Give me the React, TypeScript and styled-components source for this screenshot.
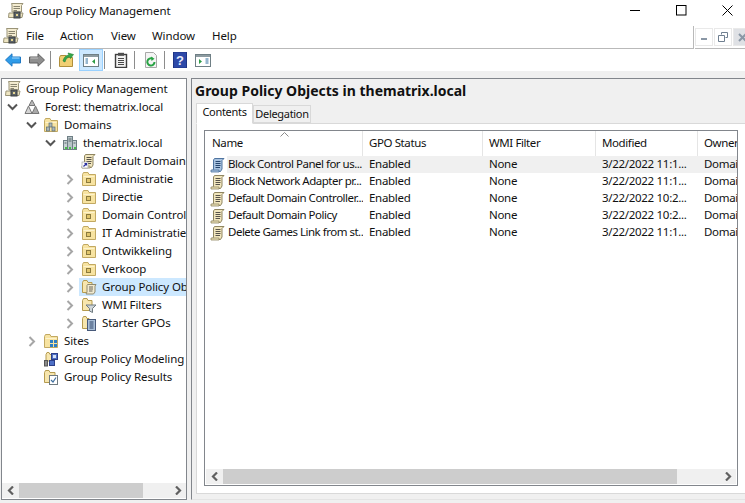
import React from 'react';
import styled, { createGlobalStyle } from 'styled-components';

// ─── Tokens ───────────────────────────────────────────────────────────────────
const UI_FONT = `"Noto Sans", "Open Sans", sans-serif`;
const C = {
  text: '#111111',
  band: '#f0f0f0',
  pane: '#82868c',
  line: '#b9b9b9',
  thumb: '#cdcdcd',
  select: '#cce8ff',
  chevron: '#a6a6a6',
  arrow: '#606060',
};

const GlobalStyle = createGlobalStyle`
  * { box-sizing: border-box; }
  html, body { margin: 0; padding: 0; background: #ffffff; }
`;

// ─── Shell ────────────────────────────────────────────────────────────────────
const Win = styled.div`
  width: 745px;
  height: 503px;
  overflow: hidden;
  display: flex;
  flex-direction: column;
  background: #ffffff;
  color: ${C.text};
  font-family: ${UI_FONT};
  font-size: 11.5px;
  letter-spacing: -0.1px;
`;

const TitleBar = styled.div`
  height: 24px;
  flex-shrink: 0;
  display: flex;
  align-items: center;
  padding: 0 0 3px 8px;
  margin-right: -5px;
`;

const TitleText = styled.span`
  flex: 1;
  margin-left: 5px;
`;

const CaptionBtn = styled.div`
  width: 46px;
  height: 22px;
  display: flex;
  align-items: center;
  justify-content: center;
`;

const MenuRow = styled.div`
  height: 25px;
  flex-shrink: 0;
  display: flex;
  align-items: stretch;
  padding-top: 2px;
`;

const MenuLeft = styled.div`
  width: 694px;
  flex-shrink: 0;
  display: flex;
  align-items: center;
  padding: 0 0 1px 3px;
  border-bottom: 1px solid ${C.line};
  border-right: 1px solid ${C.line};
`;

const MenuItem = styled.span<{ $w: number }>`
  width: ${p => p.$w}px;
  padding-bottom: 3px;
  flex-shrink: 0;
`;

const MenuIconSlot = styled.span`
  width: 23px;
  height: 18px;
  flex-shrink: 0;
`;

const MdiGroup = styled.div`
  flex: 1;
  min-width: 0;
  overflow: hidden;
  display: flex;
  align-items: flex-start;
  gap: 1px;
  padding-top: 2px;
  border-bottom: 1px solid ${C.line};
  margin-left: 1px;
`;

const MdiBtn = styled.div<{ $close?: boolean }>`
  width: 18px;
  height: 18px;
  flex-shrink: 0;
  display: flex;
  align-items: center;
  justify-content: center;
  border: 1px solid #e9e9e9;
  background: ${p => (p.$close ? '#dfe1e5' : '#ffffff')};
`;

const ToolBar = styled.div`
  height: 22px;
  flex-shrink: 0;
  display: flex;
  align-items: center;
  padding-left: 1px;
`;

const ToolBtn = styled.div<{ $active?: boolean; $w?: number }>`
  width: ${p => p.$w ?? 24}px;
  height: 22px;
  flex-shrink: 0;
  display: flex;
  align-items: center;
  justify-content: center;
  border: 1px solid ${p => (p.$active ? '#99d1ff' : 'transparent')};
  background: ${p => (p.$active ? C.select : 'transparent')};
`;

const ToolSep = styled.div`
  width: 1px;
  height: 18px;
  margin: 0 4px 0 1px;
  flex-shrink: 0;
  background: #8c8c8c;
`;

const Body = styled.div`
  flex: 1;
  min-height: 0;
  display: grid;
  grid-template-columns: 187px 1fr;
  column-gap: 4px;
  background: ${C.band};
  padding-top: 7px;
  padding-bottom: 3px;
`;

// ─── Tree pane ────────────────────────────────────────────────────────────────
const TreePane = styled.div`
  margin-left: 1px;
  border: 1px solid ${C.pane};
  background: #ffffff;
  display: flex;
  flex-direction: column;
  min-height: 0;
`;

const TreeList = styled.div`
  flex: 1;
  min-height: 0;
  overflow: hidden;
  padding-top: 1px;
`;

const TreeRow = styled.div<{ $level: number }>`
  height: 18px;
  display: flex;
  align-items: center;
  white-space: nowrap;
  overflow: hidden;
  padding-left: ${p => (p.$level === 0 ? 1 : 1 + 19 * (p.$level - 1))}px;
`;

const Chevron = styled.span<{ $hide?: boolean }>`
  width: ${p => (p.$hide ? 0 : 19)}px;
  height: 18px;
  flex-shrink: 0;
  display: flex;
  align-items: center;
  justify-content: center;
`;

const TreeItem = styled.div<{ $selected?: boolean }>`
  flex: 1;
  min-width: 0;
  height: 18px;
  display: flex;
  align-items: center;
  gap: 5px;
  padding-left: 2px;
  overflow: hidden;
  background: ${p => (p.$selected ? C.select : 'transparent')};
`;

const TreeLabel = styled.span`
  padding-bottom: 2px;
`;

// ─── Scrollbars ───────────────────────────────────────────────────────────────
const HScroll = styled.div<{ $inset: number }>`
  height: 15px;
  flex-shrink: 0;
  margin: 0 ${p => p.$inset}px 1px;
  display: flex;
  background: ${C.band};
`;

const ScrollArrow = styled.div`
  width: 17px;
  flex-shrink: 0;
  display: flex;
  align-items: center;
  justify-content: center;
`;

const ScrollThumb = styled.div<{ $w: number }>`
  width: ${p => p.$w}px;
  flex-shrink: 0;
  background: ${C.thumb};
`;

const ScrollRest = styled.div`
  flex: 1;
`;

// ─── Detail pane ──────────────────────────────────────────────────────────────
const DetailPane = styled.div`
  border-left: 1px solid ${C.pane};
  border-top: 1px solid ${C.pane};
  border-bottom: 1px solid #e4e4e4;
  display: flex;
  flex-direction: column;
  min-height: 0;
  padding-left: 3px;
`;

const Heading = styled.div`
  height: 23px;
  flex-shrink: 0;
  font-size: 14px;
  font-weight: 700;
  line-height: 23px;
  white-space: nowrap;
  letter-spacing: 0;
`;

const TabStrip = styled.div`
  height: 21px;
  flex-shrink: 0;
  display: flex;
  align-items: flex-end;
  padding-left: 1px;
  position: relative;
  z-index: 1;
`;

const Tab = styled.div<{ $active?: boolean }>`
  height: ${p => (p.$active ? 21 : 18)}px;
  width: ${p => (p.$active ? 57 : 58)}px;
  padding-bottom: ${p => (p.$active ? 4 : 2)}px;
  display: flex;
  align-items: center;
  justify-content: center;
  font-size: 11px;
  letter-spacing: -0.3px;
  background: ${p => (p.$active ? '#ffffff' : C.band)};
  border: 1px solid #d9d9d9;
  border-bottom: ${p => (p.$active ? '1px solid #ffffff' : '1px solid #d9d9d9')};
  margin-bottom: ${p => (p.$active ? -1 : 0)}px;
`;

const TabPanel = styled.div`
  flex: 1;
  min-height: 0;
  margin: 0 0 5px 1px;
  background: #ffffff;
  border: 1px solid #d9d9d9;
  border-right: none;
  padding: 6px 7px 7px 7px;
  display: flex;
`;

const ListBox = styled.div`
  flex: 1;
  min-width: 0;
  border: 1px solid ${C.pane};
  display: flex;
  flex-direction: column;
`;

const COLS = '158px 120px 113px 102px 1fr';

const ListHead = styled.div`
  height: 25px;
  flex-shrink: 0;
  display: grid;
  grid-template-columns: ${COLS};
`;

const HeadCell = styled.div`
  position: relative;
  display: flex;
  align-items: center;
  padding: 0 0 2px 6px;
  border-right: 1px solid #e5e5e5;
  overflow: hidden;
  white-space: nowrap;
  letter-spacing: -0.4px;

  &:first-child { padding-left: 7px; }
  &:last-child { border-right: none; }
`;

const SortCaret = styled.svg`
  position: absolute;
  left: 75px;
  top: 1px;
`;

const ListRows = styled.div`
  flex: 1;
  min-height: 0;
`;

const ListRow = styled.div`
  height: 17px;
  display: grid;
  grid-template-columns: ${COLS};
`;

const Cell = styled.div<{ $hl?: boolean }>`
  display: flex;
  align-items: center;
  padding: 0 0 2px 6px;
  overflow: hidden;
  white-space: nowrap;
  letter-spacing: -0.3px;
  background: ${p => (p.$hl ? '#f0f0f0' : 'transparent')};
`;

const NameCell = styled.div`
  display: flex;
  align-items: center;
  padding-left: 5px;
  min-width: 0;
`;

const NameText = styled.div<{ $hl?: boolean }>`
  flex: 1;
  height: 17px;
  line-height: 15px;
  margin-left: 1px;
  padding-left: 1px;
  white-space: nowrap;
  overflow: hidden;
  letter-spacing: -0.5px;
  background: ${p => (p.$hl ? '#f0f0f0' : 'transparent')};
`;

// ─── Icons ────────────────────────────────────────────────────────────────────
const Ico = ({ s = 16, children }: { s?: number; children: React.ReactNode }) => (
  <svg width={s} height={s} viewBox="0 0 16 16" style={{ flexShrink: 0, display: 'block' }}>{children}</svg>
);

const ChevronRight = () => (
  <svg width="8" height="11" viewBox="0 0 8 11"><path d="M1.5 1 L6 5.5 L1.5 10" fill="none" stroke={C.chevron} strokeWidth="2" /></svg>
);
const ChevronDown = () => (
  <svg width="11" height="8" viewBox="0 0 11 8"><path d="M1 1.5 L5.5 6 L10 1.5" fill="none" stroke="#555555" strokeWidth="2" /></svg>
);
const ArrowLeft = () => (
  <svg width="8" height="9" viewBox="0 0 8 9"><path d="M6 .5 L2 4.5 L6 8.5" fill="none" stroke={C.arrow} strokeWidth="2.2" /></svg>
);
const ArrowRight = () => (
  <svg width="8" height="9" viewBox="0 0 8 9"><path d="M2 .5 L6 4.5 L2 8.5" fill="none" stroke={C.arrow} strokeWidth="2.2" /></svg>
);

const Scroll = ({ blue }: { blue?: boolean }) => {
  const fill = blue ? '#a9c3e0' : '#f1e6bd';
  const edge = blue ? '#4f74a0' : '#8f8560';
  return (
    <>
      <path d="M4.5 1.5 H14 L12 3.5 V12 L10.5 14.5 H2 L3.5 12 V3 Z" fill={fill} stroke={edge} />
      <path d="M1 13 H9 V15 H1 Z" fill={fill} stroke={edge} strokeWidth=".8" />
      <path d="M5.5 4.5 H10.5 M5.5 6.5 H10.5 M5.5 8.5 H10.5 M5.5 10.5 H10" stroke={blue ? '#27466e' : '#57534a'} />
    </>
  );
};

const GpoIcon = ({ blue }: { blue?: boolean }) => <Ico><Scroll blue={blue} /></Ico>;

const AppIcon = () => (
  <Ico>
    <path d="M3.5 .5 H15 L13.5 2.5 V9 H4 V2 Z" fill="#f4ecd0" stroke="#9a9478" />
    <path d="M5.5 3.5 H12 M5.5 5.5 H12 M5.5 7.5 H9" stroke="#8a8570" />
    <path d="M1 10 H15 L14 14.5 H.5 Z" fill="#efe6c2" stroke="#9a9478" />
    <rect x="6" y="9" width="6" height="6" fill="#5d6366" stroke="#3b3f41" />
    <rect x="8" y="11" width="2" height="2" fill="#e5d591" />
  </Ico>
);

const ForestIcon = () => (
  <Ico>
    <path d="M8 1 L11 6.5 H5 Z" fill="#b9b9b9" stroke="#777777" />
    <path d="M4.5 7 L8 14.5 H1 Z" fill="#d3d3d3" stroke="#777777" />
    <path d="M11.5 7 L15 14.5 H8 Z" fill="#a9a9a9" stroke="#777777" />
  </Ico>
);

const FolderBase = () => (
  <>
    <path d="M1.5 3.5 V14.5 H14.5 V3.5 H8 L7 1.5 H2.5 Z" fill="#f7e3a1" stroke="#c2a962" />
    <path d="M2.5 5.5 H13.5" stroke="#fdf3cd" />
  </>
);

const OuIcon = () => (
  <Ico>
    <FolderBase />
    <rect x="5.5" y="7.5" width="4" height="4" fill="#e0c56b" stroke="#8b7a3d" />
  </Ico>
);

const DomainsIcon = () => (
  <Ico>
    <FolderBase />
    <rect x="6" y="6" width="3" height="4" fill="#a9b5b8" stroke="#5a6a70" strokeWidth=".7" />
    <rect x="3.5" y="10" width="3" height="4" fill="#a9b5b8" stroke="#5a6a70" strokeWidth=".7" />
    <rect x="9" y="10" width="3" height="4" fill="#a9b5b8" stroke="#5a6a70" strokeWidth=".7" />
  </Ico>
);

const DomainIcon = () => (
  <Ico>
    <rect x="5.5" y="1.5" width="5" height="13" fill="#b7c3c7" stroke="#6f7f85" />
    <rect x="1.5" y="5.5" width="4" height="9" fill="#c7d1d4" stroke="#6f7f85" />
    <rect x="10.5" y="5.5" width="4" height="9" fill="#c7d1d4" stroke="#6f7f85" />
    <path d="M6.5 4 H9.5 M6.5 6 H9.5 M2.5 8 H4.5 M11.5 8 H13.5" stroke="#5b686d" />
    <rect x="3" y="12" width="2" height="2" fill="#45c04a" />
    <rect x="12" y="12" width="2" height="2" fill="#45c04a" />
    <rect x="7" y="12" width="2" height="2" fill="#45c04a" />
  </Ico>
);

const LinkedGpoIcon = () => (
  <Ico>
    <Scroll />
    <rect x="1" y="9" width="6" height="6" fill="#ffffff" stroke="#9a9a9a" strokeWidth=".6" />
    <path d="M2.5 13.5 L5.5 10.5 M3.5 10.5 H5.5 V12.5" stroke="#2a2f9e" strokeWidth="1.2" fill="none" />
  </Ico>
);

const GpoFolderIcon = () => (
  <Ico>
    <path d="M1.5 3.5 V13.5 H11 V3.5 H7 L6 1.5 H2.5 Z" fill="#f7e6ae" stroke="#b59b4f" />
    <path d="M6.5 5.5 H15 L14 7 V13 L12.5 15 H5 L6 13 V6.5 Z" fill="#f1ead0" stroke="#8f8a70" />
    <path d="M8 8 H12 M8 10 H12 M8 12 H11.5" stroke="#6b675a" />
  </Ico>
);

const WmiIcon = () => (
  <Ico>
    <path d="M1.5 3.5 V13.5 H11 V3.5 H7 L6 1.5 H2.5 Z" fill="#f7e6ae" stroke="#b59b4f" />
    <path d="M5 8 H15 L11.5 11.5 V15.5 L8.5 14 V11.5 Z" fill="#cfd6da" stroke="#6f7a80" />
  </Ico>
);

const StarterIcon = () => (
  <Ico>
    <path d="M1.5 3.5 V13.5 H8 V3.5 H6 L5 1.5 H2.5 Z" fill="#f7e6ae" stroke="#b59b4f" />
    <rect x="6.5" y="4.5" width="8" height="11" fill="#a9bfd8" stroke="#47597a" />
    <path d="M8.5 7 H12.5 M8.5 9 H12.5 M8.5 11 H12.5 M8.5 13 H12.5" stroke="#2f4468" />
  </Ico>
);

const SitesIcon = () => (
  <Ico>
    <FolderBase />
    <rect x="7" y="7" width="3" height="3" fill="#2d7ec4" />
    <rect x="11" y="7" width="3" height="3" fill="#2d7ec4" />
    <rect x="7" y="11" width="3" height="3" fill="#2d7ec4" />
    <rect x="11" y="11" width="3" height="3" fill="#2d7ec4" />
  </Ico>
);

const ModelingIcon = () => (
  <Ico>
    <path d="M3 3.5 V10 H10 V3.5 H7 L6 1.5 H4 Z" fill="#f7e6ae" stroke="#b59b4f" />
    <rect x="8.5" y="2.5" width="6" height="6" fill="#4e70c6" stroke="#2d3f88" />
    <rect x="10" y="4" width="3" height="3" fill="#d6e2f7" />
    <rect x="1.5" y="9.5" width="3" height="5.5" fill="#8b8b8b" stroke="#565656" />
    <rect x="6.5" y="9.5" width="5" height="5" fill="#4e70c6" stroke="#2d3f88" />
  </Ico>
);

const ResultsIcon = () => (
  <Ico>
    <path d="M1.5 3.5 V13.5 H12 V3.5 H7 L6 1.5 H2.5 Z" fill="#f7e6ae" stroke="#b59b4f" />
    <rect x="6.5" y="6.5" width="8" height="9" fill="#ffffff" stroke="#6f7a80" />
    <path d="M8 11 L10 13 L13 8.5" fill="none" stroke="#3f6f9e" strokeWidth="1.2" />
  </Ico>
);

const BackIcon = () => (
  <svg width="16" height="14" viewBox="0 0 16 14"><path d="M.5 7 L7 .8 V4 H15.5 V10 H7 V13.2 Z" fill="#2f9be8" stroke="#1f78c4" /><path d="M7 5 H14.5" stroke="#a8dcff" /></svg>
);
const ForwardIcon = () => (
  <svg width="16" height="14" viewBox="0 0 16 14"><path d="M15.5 7 L9 .8 V4 H.5 V10 H9 V13.2 Z" fill="#8f8f8f" stroke="#5f5f5f" /><path d="M1.5 5 H9" stroke="#c4c4c4" /></svg>
);
const UpIcon = () => (
  <Ico>
    <path d="M.5 5.5 V14.5 H13.5 V5.5 H8 L7 3.5 H1.5 Z" fill="#f1cf73" stroke="#b08f3c" />
    <path d="M4 9 C5 5 7 3.5 10 3 L9 1 L14.5 2.5 L11.5 6.5 L10.8 4.8 C8.5 5.2 6.5 7 6 10 Z" fill="#35a84a" stroke="#1f7d33" strokeWidth=".6" />
  </Ico>
);
const TreeToggleIcon = () => (
  <Ico>
    <rect x=".5" y="2.5" width="15" height="12" fill="#ffffff" stroke="#6f7f85" />
    <rect x="1" y="3" width="14" height="2" fill="#8d9ba1" />
    <path d="M2.5 7 H5 M2.5 9 H5 M2.5 11 H5" stroke="#2e6f9e" />
    <path d="M12 7 L9 9.5 L12 12 Z" fill="#2f9c46" />
  </Ico>
);
const ClipboardIcon = () => (
  <Ico>
    <rect x="2.5" y="2.5" width="11" height="13" fill="#f2f2f2" stroke="#3f3f3f" strokeWidth="1.4" />
    <rect x="5" y=".8" width="6" height="3" fill="#4f4f4f" />
    <path d="M5 6.5 H11 M5 8.5 H11 M5 10.5 H11 M5 12.5 H11" stroke="#4a4a4a" />
  </Ico>
);
const RefreshIcon = () => (
  <Ico>
    <path d="M2.5 .5 H10.5 L13.5 3.5 V15.5 H2.5 Z" fill="#f4f4f4" stroke="#a8a8a8" />
    <path d="M11.5 10 A3.6 3.6 0 1 1 9.5 6.7" fill="none" stroke="#27a243" strokeWidth="2" />
    <path d="M8 4.5 L11.5 6.8 L8.5 9 Z" fill="#27a243" />
  </Ico>
);
const HelpIcon = () => (
  <Ico>
    <rect x="1.5" y="0" width="13" height="16" fill="#2d49a8" stroke="#1e3485" />
    <text x="8" y="13" textAnchor="middle" fontSize="13" fontWeight="700" fontFamily="Liberation Sans" fill="#e9eefc">?</text>
  </Ico>
);
const PanelIcon = () => (
  <Ico>
    <rect x=".5" y="2.5" width="15" height="12" fill="#ffffff" stroke="#6f7f85" />
    <rect x="1" y="3" width="14" height="2" fill="#8d9ba1" />
    <path d="M4 7 L7 9.5 L4 12 Z" fill="#2f9c46" />
    <path d="M10.5 7 H13.5 M10.5 9 H13.5 M10.5 11 H13.5" stroke="#2e6f9e" />
  </Ico>
);

// ─── Data ─────────────────────────────────────────────────────────────────────
type TreeNode = {
  level: number;
  label: string;
  icon: React.ReactNode;
  chevron?: 'right' | 'down';
  selected?: boolean;
};

const tree: TreeNode[] = [
  { level: 0, label: 'Group Policy Management', icon: <AppIcon /> },
  { level: 1, label: 'Forest: thematrix.local', icon: <ForestIcon />, chevron: 'down' },
  { level: 2, label: 'Domains', icon: <DomainsIcon />, chevron: 'down' },
  { level: 3, label: 'thematrix.local', icon: <DomainIcon />, chevron: 'down' },
  { level: 4, label: 'Default Domain Policy', icon: <LinkedGpoIcon /> },
  { level: 4, label: 'Administratie', icon: <OuIcon />, chevron: 'right' },
  { level: 4, label: 'Directie', icon: <OuIcon />, chevron: 'right' },
  { level: 4, label: 'Domain Controllers', icon: <OuIcon />, chevron: 'right' },
  { level: 4, label: 'IT Administratie', icon: <OuIcon />, chevron: 'right' },
  { level: 4, label: 'Ontwikkeling', icon: <OuIcon />, chevron: 'right' },
  { level: 4, label: 'Verkoop', icon: <OuIcon />, chevron: 'right' },
  { level: 4, label: 'Group Policy Objects', icon: <GpoFolderIcon />, chevron: 'right', selected: true },
  { level: 4, label: 'WMI Filters', icon: <WmiIcon />, chevron: 'right' },
  { level: 4, label: 'Starter GPOs', icon: <StarterIcon />, chevron: 'right' },
  { level: 2, label: 'Sites', icon: <SitesIcon />, chevron: 'right' },
  { level: 2, label: 'Group Policy Modeling', icon: <ModelingIcon /> },
  { level: 2, label: 'Group Policy Results', icon: <ResultsIcon /> },
];

const columns = ['Name', 'GPO Status', 'WMI Filter', 'Modified', 'Owner'];

const gpos = [
  { name: 'Block Control Panel for us...', modified: '3/22/2022 11:1...' },
  { name: 'Block Network Adapter pr...', modified: '3/22/2022 11:1...' },
  { name: 'Default Domain Controller...', modified: '3/22/2022 10:2...' },
  { name: 'Default Domain Policy', modified: '3/22/2022 10:2...' },
  { name: 'Delete Games Link from st...', modified: '3/22/2022 11:1...' },
];

// ─── Component ────────────────────────────────────────────────────────────────
export default function App() {
  return (
    <>
      <GlobalStyle />
      <Win>
        <TitleBar>
          <AppIcon />
          <TitleText>Group Policy Management</TitleText>
          <CaptionBtn>
            <svg width="11" height="11"><path d="M0 5.5 H10" stroke="#000" /></svg>
          </CaptionBtn>
          <CaptionBtn>
            <svg width="11" height="11"><rect x=".5" y=".5" width="9.5" height="9.5" fill="none" stroke="#000" /></svg>
          </CaptionBtn>
          <CaptionBtn>
            <svg width="11" height="11"><path d="M.5 .5 L10.5 10.5 M10.5 .5 L.5 10.5" stroke="#000" /></svg>
          </CaptionBtn>
        </TitleBar>

        <MenuRow>
          <MenuLeft>
            <MenuIconSlot><AppIcon /></MenuIconSlot>
            <MenuItem $w={34}>File</MenuItem>
            <MenuItem $w={51}>Action</MenuItem>
            <MenuItem $w={41}>View</MenuItem>
            <MenuItem $w={60}>Window</MenuItem>
            <MenuItem $w={40}>Help</MenuItem>
          </MenuLeft>
          <MdiGroup>
            <MdiBtn>
              <svg width="8" height="8"><rect x="1" y="5" width="6" height="2" fill="#8a97a6" /></svg>
            </MdiBtn>
            <MdiBtn>
              <svg width="10" height="10"><path d="M3.5 2.5 V.5 H9.5 V5.5 H7.5 M.5 3.5 H6.5 V9.5 H.5 Z" fill="none" stroke="#6f7f90" /></svg>
            </MdiBtn>
            <MdiBtn $close>
              <svg width="9" height="9"><path d="M1 1 L8 8 M8 1 L1 8" stroke="#8a97a6" strokeWidth="2" /></svg>
            </MdiBtn>
          </MdiGroup>
        </MenuRow>

        <ToolBar>
          <ToolBtn><BackIcon /></ToolBtn>
          <ToolBtn><ForwardIcon /></ToolBtn>
          <ToolSep />
          <ToolBtn><UpIcon /></ToolBtn>
          <ToolBtn $active><TreeToggleIcon /></ToolBtn>
          <ToolSep />
          <ToolBtn><ClipboardIcon /></ToolBtn>
          <ToolSep />
          <ToolBtn><RefreshIcon /></ToolBtn>
          <ToolSep />
          <ToolBtn $w={22}><HelpIcon /></ToolBtn>
          <ToolBtn><PanelIcon /></ToolBtn>
        </ToolBar>

        <Body>
          <TreePane>
            <TreeList>
              {tree.map(node => (
                <TreeRow key={node.label} $level={node.level}>
                  <Chevron $hide={node.level === 0}>
                    {node.chevron === 'right' && <ChevronRight />}
                    {node.chevron === 'down' && <ChevronDown />}
                  </Chevron>
                  <TreeItem $selected={node.selected}>
                    {node.icon}
                    <TreeLabel>{node.label}</TreeLabel>
                  </TreeItem>
                </TreeRow>
              ))}
            </TreeList>
            <HScroll $inset={0}>
              <ScrollArrow><ArrowLeft /></ScrollArrow>
              <ScrollThumb $w={124} />
              <ScrollRest />
              <ScrollArrow><ArrowRight /></ScrollArrow>
            </HScroll>
          </TreePane>

          <DetailPane>
            <Heading>Group Policy Objects in thematrix.local</Heading>
            <TabStrip>
              <Tab $active>Contents</Tab>
              <Tab>Delegation</Tab>
            </TabStrip>
            <TabPanel>
              <ListBox>
                <ListHead>
                  {columns.map((col, i) => (
                    <HeadCell key={col}>
                      {i === 0 && (
                        <SortCaret width="9" height="5" viewBox="0 0 9 5">
                          <path d="M.5 4.5 L4.5 .5 L8.5 4.5" fill="none" stroke="#8a8a8a" />
                        </SortCaret>
                      )}
                      {col}
                    </HeadCell>
                  ))}
                </ListHead>
                <ListRows>
                  {gpos.map((gpo, i) => (
                    <ListRow key={gpo.name}>
                      <NameCell>
                        <GpoIcon blue={i === 0} />
                        <NameText $hl={i === 0}>{gpo.name}</NameText>
                      </NameCell>
                      <Cell $hl={i === 0}>Enabled</Cell>
                      <Cell $hl={i === 0}>None</Cell>
                      <Cell $hl={i === 0}>{gpo.modified}</Cell>
                      <Cell $hl={i === 0}>Domain Admins</Cell>
                    </ListRow>
                  ))}
                </ListRows>
                <HScroll $inset={1}>
                  <ScrollArrow><ArrowLeft /></ScrollArrow>
                  <ScrollThumb $w={454} />
                  <ScrollRest />
                  <ScrollArrow><ArrowRight /></ScrollArrow>
                </HScroll>
              </ListBox>
            </TabPanel>
          </DetailPane>
        </Body>
      </Win>
    </>
  );
}
